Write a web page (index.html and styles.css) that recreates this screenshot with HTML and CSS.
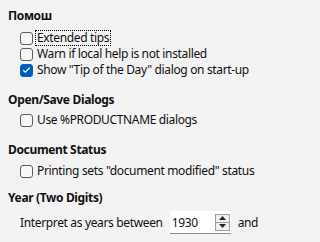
FILE: index.html
```html
<!DOCTYPE html>
<html>
<head>
<meta charset="utf-8">
<link rel="stylesheet" href="styles.css">
</head>
<body>
<div class="page">
  <section class="group g-help">
    <h2 class="head">Помош</h2>
    <div class="opts">
      <label class="cb"><span class="box"></span><span class="lbl focus">Extended tips</span></label>
      <label class="cb"><span class="box"></span><span class="lbl">Warn if local help is not installed</span></label>
      <label class="cb"><span class="box checked"><svg width="9" height="8" viewBox="0 0 9 8"><path d="M1.2 4.2 L3.4 6.2 L7.8 1.6" fill="none" stroke="#fff" stroke-width="1.3"/></svg></span><span class="lbl">Show "Tip of the Day" dialog on start-up</span></label>
    </div>
  </section>
  <section class="group g-dialogs">
    <h2 class="head">Open/Save Dialogs</h2>
    <div class="opts">
      <label class="cb"><span class="box"></span><span class="lbl">Use %PRODUCTNAME dialogs</span></label>
    </div>
  </section>
  <section class="group g-status">
    <h2 class="head">Document Status</h2>
    <div class="opts">
      <label class="cb"><span class="box"></span><span class="lbl">Printing sets "document modified" status</span></label>
    </div>
  </section>
  <section class="group g-year">
    <h2 class="head">Year (Two Digits)</h2>
    <div class="yearrow">
      <span class="lbl">Interpret as years between</span>
      <div class="spin">
        <span class="val">1930</span>
        <div class="btns">
          <span class="btn"><svg width="7" height="4" viewBox="0 0 7 4"><path d="M0 4 L3.5 0 L7 4 Z" fill="#222"/></svg></span>
          <span class="btn"><svg width="7" height="4" viewBox="0 0 7 4"><path d="M0 0 L3.5 4 L7 0 Z" fill="#222"/></svg></span>
        </div>
      </div>
      <span class="lbl">and</span>
    </div>
  </section>
</div>
</body>
</html>
```
FILE: styles.css
```css
html, body {
  margin: 0;
  padding: 0;
  background: #f3f3f3;
}
body {
  width: 267px;
  height: 242px;
  overflow: hidden;
  font-family: "Noto Sans", "Open Sans", sans-serif;
  font-size: 12px;
  letter-spacing: -0.35px;
  color: #111;
}
.page {
  padding: 8px 0 0 8px;
}
.head {
  margin: 0;
  font-size: 12px;
  font-weight: 700;
  line-height: 16px;
  height: 16px;
}
.g-dialogs, .g-status {
  margin-top: 14px;
}
.g-year {
  margin-top: 11px;
}
.opts {
  display: flex;
  flex-direction: column;
  padding-left: 12px;
}
.g-help .opts {
  margin-top: 6px;
}
.g-dialogs .opts {
  margin-top: 4px;
}
.g-status .opts {
  margin-top: 5px;
}
.cb {
  display: flex;
  align-items: center;
  height: 16px;
  gap: 4px;
}
.box {
  width: 11px;
  height: 11px;
  border: 1px solid #5d5d5d;
  border-radius: 3px;
  background: #f7f7f7;
  display: flex;
  align-items: center;
  justify-content: center;
}
.box.checked {
  background: #005fb8;
  border-color: #005fb8;
}
.lbl {
  line-height: 14px;
  white-space: nowrap;
}
.focus {
  outline: 1px dotted #000;
  outline-offset: 0;
  padding: 0 1px;
  margin-left: -1px;
}
.yearrow {
  display: flex;
  align-items: center;
  padding-left: 12px;
  margin-top: 5px;
  gap: 7px;
}
.spin {
  width: 61px;
  height: 22px;
  background: #fff;
  border-bottom: 1px solid #8a8a8a;
  display: flex;
  align-items: center;
  justify-content: space-between;
}
.val {
  padding-left: 2px;
}
.btns {
  display: flex;
  flex-direction: column;
  margin-right: 1px;
}
.btn {
  width: 13px;
  height: 7px;
  border: 1px solid #a0a0a0;
  background: #f0f0f0;
  display: flex;
  align-items: center;
  justify-content: center;
}
.btn + .btn {
  border-top: none;
}
```
